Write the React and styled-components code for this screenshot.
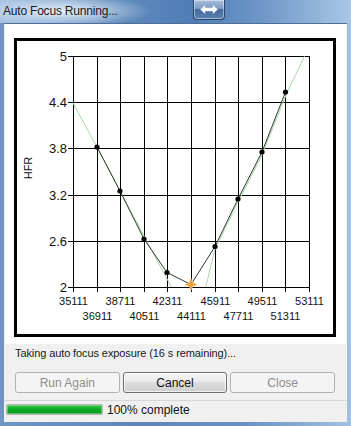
import styled, { createGlobalStyle } from "styled-components";

const GlobalStyle = createGlobalStyle`
    html, body {
        margin: 0;
        padding: 0;
        background: #fff;
    }
    body {
        font-family: "Liberation Sans", Arial, sans-serif;
    }
`;

const Window = styled.div`
    width: 351px;
    height: 426px;
    display: flex;
    flex-direction: column;
    box-sizing: border-box;
    background: linear-gradient(to right, #6f95c4 0%, #5c86ba 40%, #6891c3 70%, #a3c1e2 100%);
    overflow: hidden;
`;

const TitleBar = styled.div`
    height: 23px;
    display: flex;
    align-items: flex-start;
    background:
        radial-gradient(ellipse 90px 16px at 62px 11px, rgba(235, 243, 251, 0.95), rgba(235, 243, 251, 0) 100%),
        linear-gradient(to right, #a4c0e0 0%, #5f89bc 35%, #4e7db6 55%, #6f98c8 75%, #a9c6e5 100%);
`;

const Title = styled.div`
    width: 193px;
    padding-left: 3px;
    box-sizing: border-box;
    font-size: 12px;
    line-height: 22px;
    letter-spacing: -0.2px;
    color: #1a1a1a;
`;

const SizeButton = styled.div`
    width: 32px;
    height: 20px;
    box-sizing: border-box;
    display: flex;
    align-items: center;
    justify-content: center;
    border: 1px solid #2c4466;
    border-top: none;
    border-radius: 0 0 4px 4px;
    background: linear-gradient(#a9bfdb 0%, #7d9cc4 45%, #46699a 50%, #5b82b4 100%);
    box-shadow: inset 0 0 0 1px rgba(255, 255, 255, 0.45);
`;

const Client = styled.div`
    flex: 1;
    margin: 0 4px 4px 4px;
    display: flex;
    flex-direction: column;
    background: #f0f0f0;
    border-top: 1px solid #4f6f99;
`;

const ChartPanel = styled.div`
    height: 320px;
    margin: 0 1px;
    padding: 14px 0 0 9px;
    box-sizing: border-box;
    background: #fff;
`;

const ChartBox = styled.div`
    width: 322px;
    height: 299px;
    box-sizing: border-box;
    border: 3px solid #000;
    background: #fff;

    svg {
        display: block;
    }
`;

const StatusText = styled.div`
    margin: 2px 0 0 11px;
    font-size: 11px;
    line-height: 14px;
    letter-spacing: -0.1px;
    color: #1a1a1a;
`;

const ButtonRow = styled.div`
    width: 320px;
    margin: 12px 0 0 11px;
    display: grid;
    grid-template-columns: repeat(3, 1fr);
    column-gap: 3px;
`;

const Button = styled.button`
    height: 21px;
    padding: 0;
    box-sizing: border-box;
    font-family: "Liberation Sans", Arial, sans-serif;
    font-size: 12px;
    color: #111;
    border: 1px solid #707070;
    border-radius: 3px;
    background: linear-gradient(#f2f2f2 0%, #ebebeb 50%, #dddddd 50%, #cfcfcf 100%);
    box-shadow: inset 0 0 0 1px rgba(255, 255, 255, 0.7);

    &:disabled {
        color: #8d8d8d;
        border-color: #adb2b5;
        background: #f4f4f4;
        box-shadow: none;
    }
`;

const StatusBar = styled.div`
    margin-top: auto;
    height: 22px;
    box-sizing: border-box;
    border-top: 1px solid #d7d7d7;
    padding: 3px 0 0 2px;
    display: flex;
    align-items: flex-start;
    gap: 4px;
`;

const Progress = styled.div`
    width: 97px;
    height: 11px;
    box-sizing: border-box;
    border: 1px solid #b4b4b4;
    border-radius: 2px;
    background: linear-gradient(#37c24a 0%, #1bb52f 35%, #06a51f 55%, #0d9c22 100%);
    box-shadow: inset 0 0 0 1px rgba(255, 255, 255, 0.35);
`;

const ProgressText = styled.div`
    font-size: 12px;
    line-height: 12px;
    color: #111;
`;

const gx = (i) => Math.round(73 + i * 23.6);
const gy = (j) => Math.round(56 + j * 46.2);

const yLabels = ["5", "4.4", "3.8", "3.2", "2.6", "2"];

const points = [
    [97, 147], [120, 191], [144, 239], [167, 272.5],
    [191, 284.5], [215, 246.5], [238, 199], [262, 152], [285.5, 92]
];

function Star({ x, y })
{
    const pts = [];
    for (let k = 0; k < 8; k++)
    {
        const r = k % 2 === 0 ? 6 : 2.4;
        const a = (Math.PI / 4) * k - Math.PI / 2;
        pts.push(`${(x + r * Math.cos(a)).toFixed(1)},${(y + r * Math.sin(a)).toFixed(1)}`);
    }
    return <polygon points={pts.join(" ")} fill="#eea235" stroke="#f3b862" strokeWidth="0.6" />;
}

function Chart()
{
    return (
        <svg width="316" height="293" viewBox="17 41 316 293"
            fontFamily="'Liberation Sans', Arial, sans-serif">
            <defs>
                <clipPath id="plot">
                    <rect x="73" y="56" width="236" height="231" />
                </clipPath>
            </defs>
            <g shapeRendering="crispEdges" stroke="#000" strokeWidth="1">
                {yLabels.map((_, j) => (
                    <line key={"h" + j} x1="68" x2={gx(10) + 0.5} y1={gy(j) + 0.5} y2={gy(j) + 0.5} />
                ))}
                {Array.from({ length: 11 }, (_, i) => (
                    <line key={"v" + i} x1={gx(i) + 0.5} x2={gx(i) + 0.5} y1="56" y2="292" />
                ))}
            </g>
            {yLabels.map((t, j) => (
                <text key={t} x="67" y={gy(j) + 5} fontSize="13" textAnchor="end" fill="#111">{t}</text>
            ))}
            {Array.from({ length: 11 }, (_, i) => (
                <text key={"x" + i} x={gx(i) + 0.5} y={i % 2 === 0 ? 305 : 320}
                    fontSize="11" textAnchor="middle" fill="#111">{35111 + i * 1800}</text>
            ))}
            <text x="36" y="172" fontSize="11" textAnchor="middle" fill="#111"
                transform="rotate(-90 32 172)">HFR</text>
            <g clipPath="url(#plot)" fill="none" stroke="#a6d9a6" strokeWidth="1">
                <polyline points="73,103 97,147 120,191 144,236 173,290" />
                <polyline points="205,290 215,249 238,202 262,155 286,95 305,55" />
            </g>
            <polyline points={points.map((p) => p.join(",")).join(" ")}
                fill="none" stroke="#2f3a2f" strokeWidth="1" />
            {points.map(([x, y], k) => (k === 4
                ? <Star key={k} x={x} y={y} />
                : <circle key={k} cx={x} cy={y} r="2.6" fill="#000" />))}
        </svg>
    );
}

export default function App()
{
    return (
        <>
            <GlobalStyle />
            <Window>
                <TitleBar>
                    <Title>Auto Focus Running...</Title>
                    <SizeButton>
                        <svg width="18" height="9" viewBox="0 0 18 9">
                            <path d="M0.5 4.5 L5 0.5 L5 3 L13 3 L13 0.5 L17.5 4.5 L13 8.5 L13 6 L5 6 L5 8.5 Z"
                                fill="#fff" stroke="#dfe8f3" strokeWidth="0.5" />
                        </svg>
                    </SizeButton>
                </TitleBar>
                <Client>
                    <ChartPanel>
                        <ChartBox>
                            <Chart />
                        </ChartBox>
                    </ChartPanel>
                    <StatusText>Taking auto focus exposure (16 s remaining)...</StatusText>
                    <ButtonRow>
                        <Button disabled>Run Again</Button>
                        <Button>Cancel</Button>
                        <Button disabled>Close</Button>
                    </ButtonRow>
                    <StatusBar>
                        <Progress />
                        <ProgressText>100% complete</ProgressText>
                    </StatusBar>
                </Client>
            </Window>
        </>
    );
}
